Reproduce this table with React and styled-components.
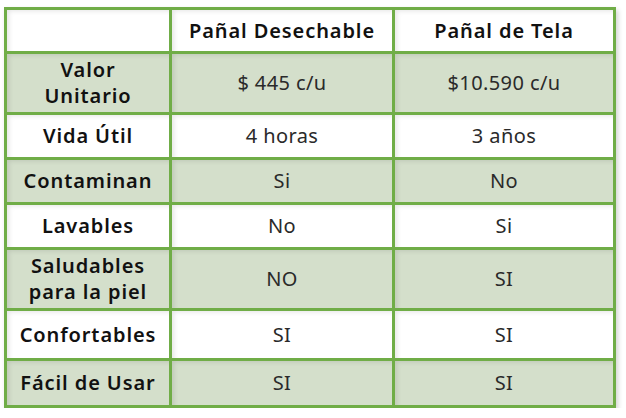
import React from 'react';
import styled, { createGlobalStyle } from 'styled-components';

const GlobalStyle = createGlobalStyle`
  html, body {
    margin: 0;
    padding: 0;
    background: #ffffff;
  }
  body {
    font-family: "Noto Sans", Lato, sans-serif;
  }
`;

const Page = styled.div`
  padding: 7px 0 0 4px;
`;

const Table = styled.div`
  display: grid;
  grid-template-columns: 162px 220px 218px;
  grid-template-rows: 41px 58px 42px 42px 42px 58px 47px 44px;
  gap: 3px;
  padding: 3px;
  width: max-content;
  background: #70ad47;
  box-shadow: 2px 3px 5px rgba(0, 0, 0, 0.18);
`;

const Cell = styled.div`
  display: flex;
  align-items: center;
  justify-content: center;
  text-align: center;
  background: ${p => (p.$shaded ? '#d4dfcb' : '#ffffff')};
  box-shadow: inset 4px 3px 5px -2px rgba(0, 0, 0, 0.1);
  color: ${p => (p.$label ? '#111111' : '#2a2a2a')};
  font-size: 20px;
  font-weight: ${p => (p.$label ? 600 : 400)};
  line-height: 26px;
  letter-spacing: ${p => (p.$label ? '0.9px' : '0.4px')};
`;

const HeaderCell = styled(Cell)`
  font-weight: 600;
  color: #111111;
  letter-spacing: 0.9px;
`;

const rows = [
  ['Valor\nUnitario', '$ 445 c/u', '$10.590 c/u'],
  ['Vida Útil', '4 horas', '3 años'],
  ['Contaminan', 'Si', 'No'],
  ['Lavables', 'No', 'Si'],
  ['Saludables\npara la piel', 'NO', 'SI'],
  ['Confortables', 'SI', 'SI'],
  ['Fácil de Usar', 'SI', 'SI'],
];

const Label = ({ text }) =>
  text.split('\n').map((line, i) => (
    <React.Fragment key={i}>
      {i > 0 && <br />}
      {line}
    </React.Fragment>
  ));

export default function App() {
  return (
    <Page>
      <GlobalStyle />
      <Table>
        <HeaderCell />
        <HeaderCell>Pañal Desechable</HeaderCell>
        <HeaderCell>Pañal de Tela</HeaderCell>
        {rows.map((row, r) => {
          const shaded = r % 2 === 0;
          return (
            <React.Fragment key={r}>
              <Cell $label $shaded={shaded}>
                <span><Label text={row[0]} /></span>
              </Cell>
              <Cell $shaded={shaded}>{row[1]}</Cell>
              <Cell $shaded={shaded}>{row[2]}</Cell>
            </React.Fragment>
          );
        })}
      </Table>
    </Page>
  );
}
